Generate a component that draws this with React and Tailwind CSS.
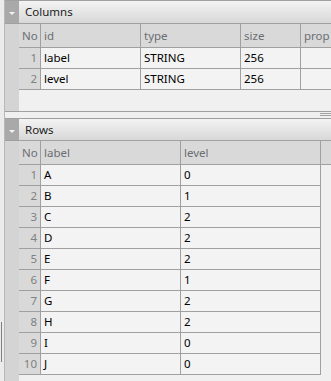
import React from "react";

const colDefs = [
  { name: "No", w: "w-[22px]" },
  { name: "id", w: "w-[100px]" },
  { name: "type", w: "w-[100px]" },
  { name: "size", w: "w-[60px]" },
  { name: "prop", w: "w-[60px]" },
];

const colData = [
  ["label", "STRING", "256", ""],
  ["level", "STRING", "256", ""],
];

const rowData = [
  ["A", "0"],
  ["B", "1"],
  ["C", "2"],
  ["D", "2"],
  ["E", "2"],
  ["F", "1"],
  ["G", "2"],
  ["H", "2"],
  ["I", "0"],
  ["J", "0"],
];

function Bar({ title, tall }) {
  return (
    <div className={"flex border-y border-[#a0a0a0] " + (tall ? "h-[24px]" : "h-[23px]")}>
      <div className="w-[14px] bg-[#a9a9a9] flex items-center justify-center">
        <div className="w-0 h-0 border-l-[3px] border-r-[3px] border-t-[3px] border-l-transparent border-r-transparent border-t-[#f4f4f4] mt-[3px]" />
      </div>
      <div className="flex-1 bg-linear-to-b from-[#f3f3f3] to-[#d8d8d8] flex items-center pl-[6px] text-[#1b1b1b]">
        {title}
      </div>
    </div>
  );
}

function HeadCell({ children, w, last }) {
  return (
    <div
      className={
        "h-[24px] shrink-0 flex items-center pl-[3px] bg-[#d9d9d9] text-[#6b6e73] border-b border-[#a0a0a0] " +
        w +
        (last ? "" : " border-r")
      }
    >
      {children}
    </div>
  );
}

function NoCell({ n }) {
  return (
    <div className="w-[22px] h-[21px] shrink-0 flex items-center justify-end pr-[3px] bg-[#d9d9d9] text-[#808080] border-b border-r border-[#a0a0a0]">
      {n}
    </div>
  );
}

function Cell({ children, w, last }) {
  return (
    <div
      className={
        "h-[21px] shrink-0 flex items-center pl-[3px] bg-[#f3f3f3] text-black border-b border-[#a0a0a0] " +
        w +
        (last ? "" : " border-r")
      }
    >
      {children}
    </div>
  );
}

function ColumnsTable() {
  return (
    <div className="flex-1 overflow-hidden">
      <div className="flex">
        {colDefs.map((c, i) => (
          <HeadCell key={c.name} w={c.w} last={i === colDefs.length - 1}>
            {c.name}
          </HeadCell>
        ))}
      </div>
      {colData.map((r, i) => (
        <div key={i} className="flex">
          <NoCell n={i + 1} />
          <Cell w="w-[100px]">{r[0]}</Cell>
          <Cell w="w-[100px]">{r[1]}</Cell>
          <Cell w="w-[60px]">{r[2]}</Cell>
          <Cell w="w-[60px]" last>{r[3]}</Cell>
        </div>
      ))}
    </div>
  );
}

function RowsTable() {
  return (
    <div className="flex-1 overflow-hidden">
      <div className="flex">
        <HeadCell w="w-[22px]">No</HeadCell>
        <HeadCell w="w-[140px]">label</HeadCell>
        <HeadCell w="w-[140px]">level</HeadCell>
        <div className="flex-1 h-[24px] bg-[#d9d9d9] border-b border-[#a0a0a0]" />
      </div>
      {rowData.map((r, i) => (
        <div key={i} className="flex">
          <NoCell n={i + 1} />
          <Cell w="w-[140px]">{r[0]}</Cell>
          <Cell w="w-[140px]">{r[1]}</Cell>
        </div>
      ))}
    </div>
  );
}

export default function App() {
  return (
    <div
      className="w-[331px] h-[381px] flex bg-[#f0f0f0] overflow-hidden text-[11.5px] leading-none"
      style={{ fontFamily: '"Noto Sans", "Open Sans", sans-serif' }}
    >
      <div className="w-[4px] shrink-0 bg-[#ebebeb] flex flex-col">
        <div className="mt-[322px] ml-[1px] w-px h-[40px] bg-[#808080]" />
      </div>
      <div className="flex-1 flex flex-col border-l border-[#b8b8b8]">
        <Bar title="Columns" tall />
        <div className="flex h-[88px] border-b border-[#a0a0a0]">
          <div className="w-[14px] shrink-0 bg-[#d4d4d4]" />
          <ColumnsTable />
        </div>
        <div className="h-[6px] flex justify-end pr-[1px]">
          <div className="w-[40px] flex flex-col pt-[1px] gap-[1px]">
            <div className="h-px bg-[#a0a0a0]" />
            <div className="h-px bg-[#a0a0a0]" />
          </div>
        </div>
        <Bar title="Rows" />
        <div className="flex flex-1">
          <div className="w-[14px] shrink-0 bg-[#d4d4d4]" />
          <RowsTable />
        </div>
      </div>
    </div>
  );
}
